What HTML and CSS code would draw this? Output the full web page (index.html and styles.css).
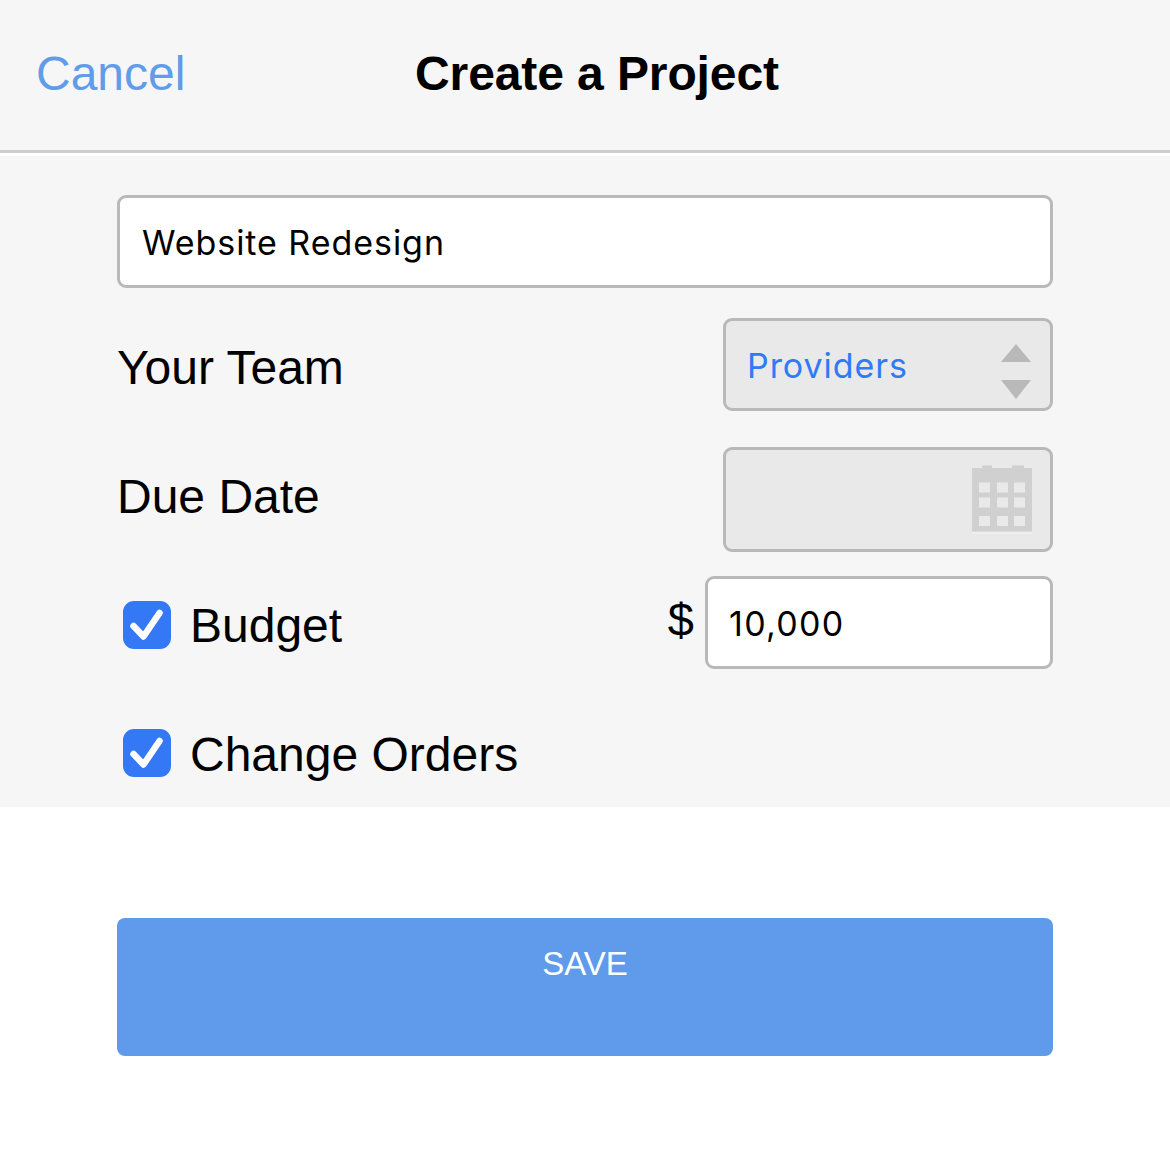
FILE: index.html
```html
<!DOCTYPE html>
<html lang="en">
<head>
<meta charset="utf-8">
<title>Create a Project</title>
<link rel="stylesheet" href="styles.css">
</head>
<body>
<div class="panel">
  <header class="nav">
    <a class="cancel">Cancel</a>
    <h1 class="title">Create a Project</h1>
  </header>
  <form class="form">
    <div class="field name-field">Website Redesign</div>
    <div class="row team-row">
      <span class="label">Your Team</span>
      <div class="field select">
        <span class="select-value">Providers</span>
        <svg class="arrows" width="32" height="56" viewBox="0 0 32 56"><path d="M16 0 31 18H1Z"/><path d="M1 36H31L16 55Z"/></svg>
      </div>
    </div>
    <div class="row date-row">
      <span class="label">Due Date</span>
      <div class="field date">
        <svg class="calendar" width="62" height="70" viewBox="0 0 62 70">
          <path class="cal-body" d="M1 3H11V0.5H21V3H41V0.5H53V3H61V66.5H1Z"/>
          <path class="cal-line" d="M1 67H61V69H1Z"/>
          <g class="cal-cells">
            <rect x="8" y="17.5" width="11" height="10"/><rect x="26" y="17.5" width="11" height="10"/><rect x="43" y="17.5" width="11" height="10"/>
            <rect x="8" y="32.5" width="11" height="10"/><rect x="26" y="32.5" width="11" height="10"/><rect x="43" y="32.5" width="11" height="10"/>
            <rect x="8" y="51" width="11" height="10"/><rect x="26" y="51" width="11" height="10"/><rect x="43" y="51" width="11" height="10"/>
          </g>
        </svg>
      </div>
    </div>
    <div class="row budget-row">
      <span class="check-label">
        <svg class="check" width="48" height="48" viewBox="0 0 48 48"><rect width="48" height="48" rx="11"/><path d="M10.5 25 20.5 35.5 36.5 12"/></svg>
        <span class="label">Budget</span>
      </span>
      <span class="amount">
        <span class="dollar">$</span>
        <div class="field budget-field">10,000</div>
      </span>
    </div>
    <div class="row orders-row">
      <span class="check-label">
        <svg class="check" width="48" height="48" viewBox="0 0 48 48"><rect width="48" height="48" rx="11"/><path d="M10.5 25 20.5 35.5 36.5 12"/></svg>
        <span class="label">Change Orders</span>
      </span>
    </div>
  </form>
</div>
<div class="actions">
  <button class="save" type="button">SAVE</button>
</div>
</body>
</html>
```
FILE: styles.css
```css
* { box-sizing: border-box; }
html, body { margin: 0; padding: 0; background: #fff; }
body { font-family: "Liberation Sans", Arial, sans-serif; color: #000; height: 1153px; overflow: hidden; }

.panel { background: #f6f6f6; height: 807px; }

.nav {
  height: 156px;
  border-bottom: 3px solid #fff;
  position: relative;
  display: flex;
  align-items: center;
  padding: 0 36px 6px;
  background: linear-gradient(#f6f6f6 150px, #cdcdcd 150px);
}
.cancel { font-size: 48px; line-height: 1; color: #619cea; }
.title {
  position: absolute;
  left: 415px;
  top: 47px;
  margin: 0;
  font-size: 48px;
  line-height: 53px;
  font-weight: 700;
  letter-spacing: -0.1px;
}

.form { padding: 39px 117px 0; }
.field {
  background: #fff;
  border: 3px solid #b9b9b9;
  border-radius: 9px;
  height: 93px;
  display: flex;
  align-items: center;
  font-family: "Inter", sans-serif;
  font-size: 34px;
  letter-spacing: 0.95px;
  padding-top: 1px;
}
.name-field { padding-left: 22px; }

.row { display: flex; justify-content: space-between; }
.label { font-size: 48px; line-height: 53px; }

.team-row { margin-top: 30px; height: 93px; align-items: center; }
.team-row .label { padding-top: 6px; line-height: 59px; }
.select, .date { width: 330px; background: #e9e9e9; }
.select { padding: 2px 18px 0 21px; justify-content: space-between; }
.select-value { color: #2f7bf6; }
.arrows { fill: #b9b9b9; margin-top: 12px; }

.date-row { margin-top: 36px; height: 105px; align-items: center; }
.date-row .label { padding-bottom: 6px; line-height: 59px; }
.date { height: 105px; justify-content: flex-end; padding: 0 17px 0 0; }
.cal-body { fill: #d0d0d0; }
.cal-line { fill: #efefef; }
.cal-cells { fill: #e9e9e9; }

.budget-row { margin-top: 24px; height: 93px; align-items: center; }
.check-label { display: flex; align-items: center; gap: 19px; padding-left: 6px; padding-top: 4px; }
.check { display: block; flex: none; }
.budget-row .label { padding-top: 2px; }
.orders-row .label { padding-top: 2px; }
.orders-row .check { margin-top: -1px; }
.check rect { fill: #3478f6; }
.check path { fill: none; stroke: #fff; stroke-width: 6.5px; stroke-linecap: round; stroke-linejoin: round; }
.amount { display: flex; align-items: center; gap: 11px; }
.dollar { font-size: 47px; line-height: 53px; margin-top: -6px; }
.budget-field { width: 348px; padding-left: 21px; letter-spacing: 1.3px; }

.orders-row { margin-top: 36px; height: 93px; align-items: center; }

.actions { padding: 111px 117px 0; }
.save {
  display: flex;
  justify-content: center;
  align-items: flex-start;
  width: 100%;
  height: 138px;
  border: 0;
  border-radius: 8px;
  background: #5f9bea;
  color: #fff;
  font-family: "Liberation Sans", Arial, sans-serif;
  font-size: 33px;
  padding: 27px 0 0;
  line-height: 38px;
}
```
